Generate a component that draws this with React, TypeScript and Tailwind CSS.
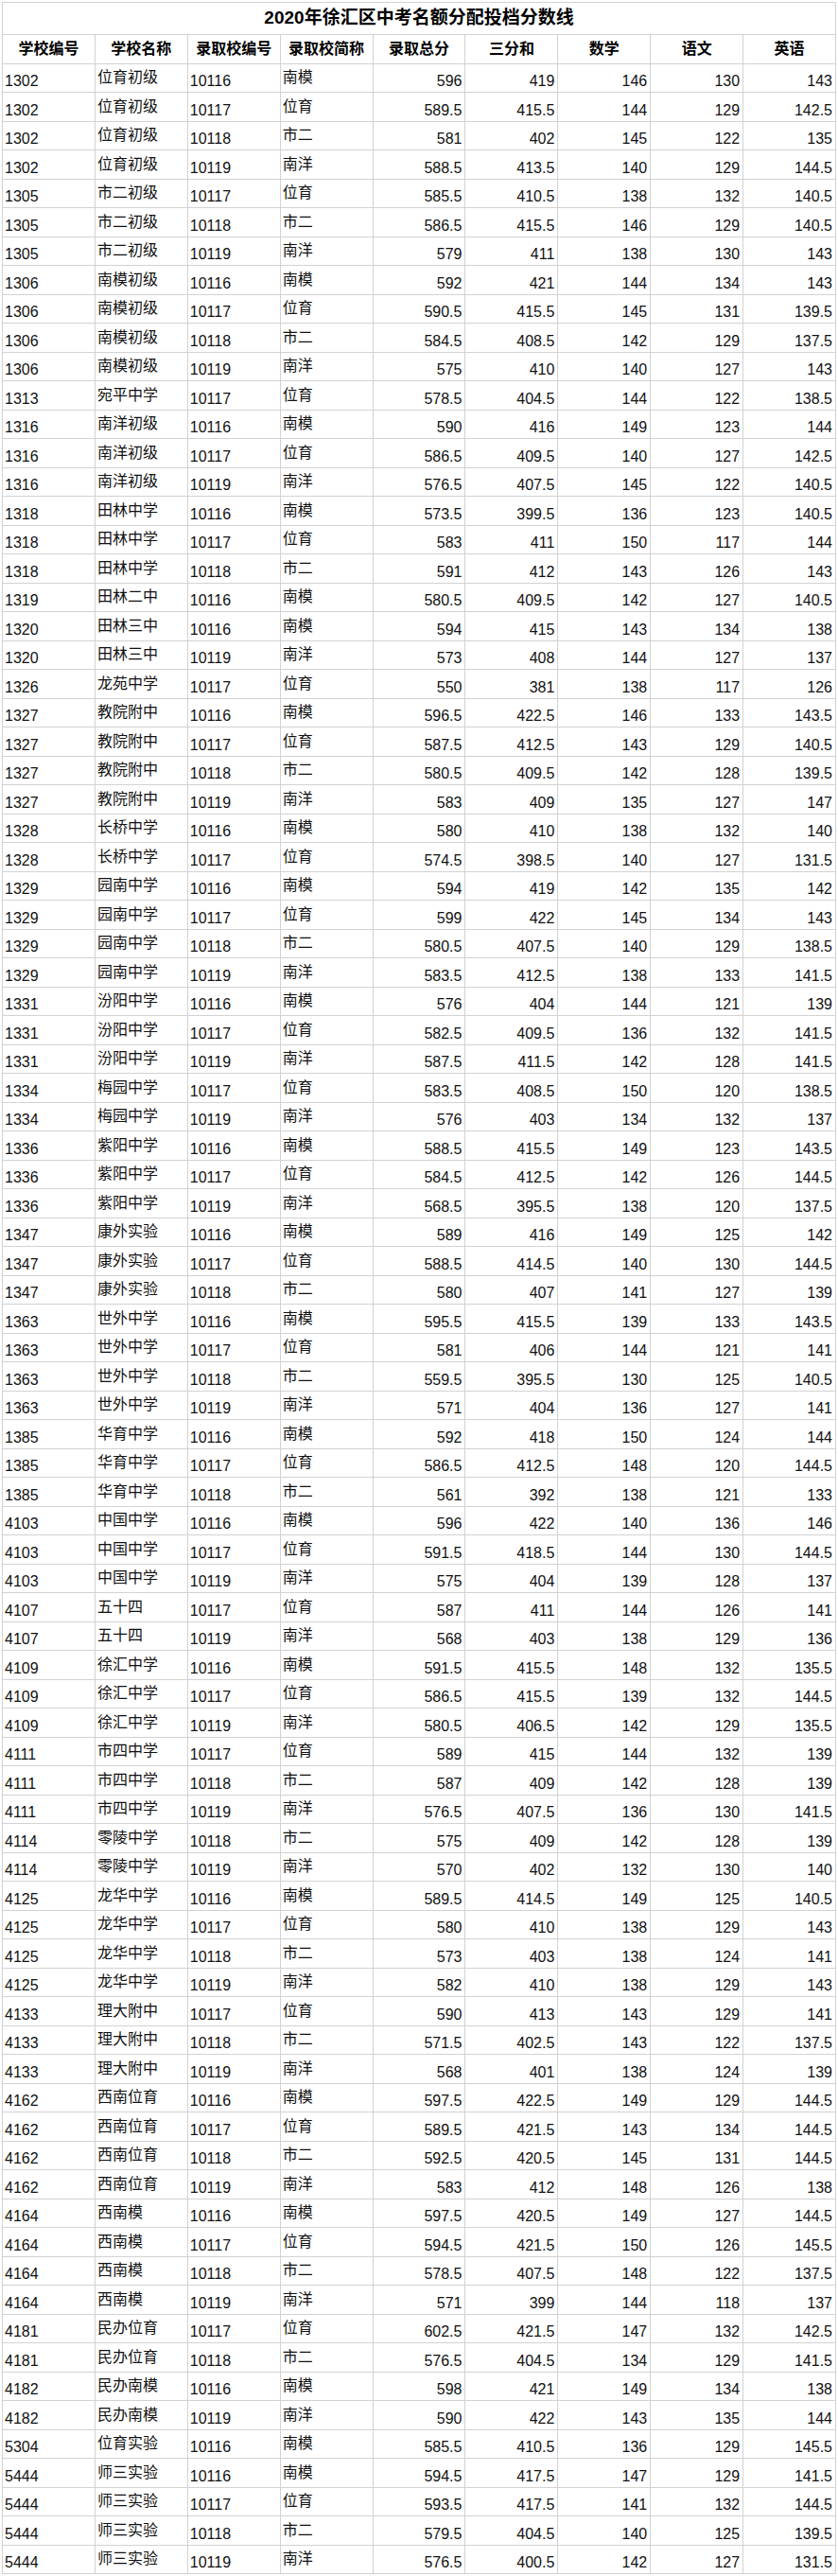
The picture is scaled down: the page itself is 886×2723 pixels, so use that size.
const SCHOOLS: Record<string, string> = {
  "10116": "南模",
  "10117": "位育",
  "10118": "市二",
  "10119": "南洋",
};

const HEADERS = ["学校编号", "学校名称", "录取校编号", "录取校简称", "录取总分", "三分和", "数学", "语文", "英语"];

// 学校编号 学校名称 录取校编号 录取总分 三分和 数学 语文 英语
const RAW = `1302 位育初级 10116 596 419 146 130 143
1302 位育初级 10117 589.5 415.5 144 129 142.5
1302 位育初级 10118 581 402 145 122 135
1302 位育初级 10119 588.5 413.5 140 129 144.5
1305 市二初级 10117 585.5 410.5 138 132 140.5
1305 市二初级 10118 586.5 415.5 146 129 140.5
1305 市二初级 10119 579 411 138 130 143
1306 南模初级 10116 592 421 144 134 143
1306 南模初级 10117 590.5 415.5 145 131 139.5
1306 南模初级 10118 584.5 408.5 142 129 137.5
1306 南模初级 10119 575 410 140 127 143
1313 宛平中学 10117 578.5 404.5 144 122 138.5
1316 南洋初级 10116 590 416 149 123 144
1316 南洋初级 10117 586.5 409.5 140 127 142.5
1316 南洋初级 10119 576.5 407.5 145 122 140.5
1318 田林中学 10116 573.5 399.5 136 123 140.5
1318 田林中学 10117 583 411 150 117 144
1318 田林中学 10118 591 412 143 126 143
1319 田林二中 10116 580.5 409.5 142 127 140.5
1320 田林三中 10116 594 415 143 134 138
1320 田林三中 10119 573 408 144 127 137
1326 龙苑中学 10117 550 381 138 117 126
1327 教院附中 10116 596.5 422.5 146 133 143.5
1327 教院附中 10117 587.5 412.5 143 129 140.5
1327 教院附中 10118 580.5 409.5 142 128 139.5
1327 教院附中 10119 583 409 135 127 147
1328 长桥中学 10116 580 410 138 132 140
1328 长桥中学 10117 574.5 398.5 140 127 131.5
1329 园南中学 10116 594 419 142 135 142
1329 园南中学 10117 599 422 145 134 143
1329 园南中学 10118 580.5 407.5 140 129 138.5
1329 园南中学 10119 583.5 412.5 138 133 141.5
1331 汾阳中学 10116 576 404 144 121 139
1331 汾阳中学 10117 582.5 409.5 136 132 141.5
1331 汾阳中学 10119 587.5 411.5 142 128 141.5
1334 梅园中学 10117 583.5 408.5 150 120 138.5
1334 梅园中学 10119 576 403 134 132 137
1336 紫阳中学 10116 588.5 415.5 149 123 143.5
1336 紫阳中学 10117 584.5 412.5 142 126 144.5
1336 紫阳中学 10119 568.5 395.5 138 120 137.5
1347 康外实验 10116 589 416 149 125 142
1347 康外实验 10117 588.5 414.5 140 130 144.5
1347 康外实验 10118 580 407 141 127 139
1363 世外中学 10116 595.5 415.5 139 133 143.5
1363 世外中学 10117 581 406 144 121 141
1363 世外中学 10118 559.5 395.5 130 125 140.5
1363 世外中学 10119 571 404 136 127 141
1385 华育中学 10116 592 418 150 124 144
1385 华育中学 10117 586.5 412.5 148 120 144.5
1385 华育中学 10118 561 392 138 121 133
4103 中国中学 10116 596 422 140 136 146
4103 中国中学 10117 591.5 418.5 144 130 144.5
4103 中国中学 10119 575 404 139 128 137
4107 五十四 10117 587 411 144 126 141
4107 五十四 10119 568 403 138 129 136
4109 徐汇中学 10116 591.5 415.5 148 132 135.5
4109 徐汇中学 10117 586.5 415.5 139 132 144.5
4109 徐汇中学 10119 580.5 406.5 142 129 135.5
4111 市四中学 10117 589 415 144 132 139
4111 市四中学 10118 587 409 142 128 139
4111 市四中学 10119 576.5 407.5 136 130 141.5
4114 零陵中学 10118 575 409 142 128 139
4114 零陵中学 10119 570 402 132 130 140
4125 龙华中学 10116 589.5 414.5 149 125 140.5
4125 龙华中学 10117 580 410 138 129 143
4125 龙华中学 10118 573 403 138 124 141
4125 龙华中学 10119 582 410 138 129 143
4133 理大附中 10117 590 413 143 129 141
4133 理大附中 10118 571.5 402.5 143 122 137.5
4133 理大附中 10119 568 401 138 124 139
4162 西南位育 10116 597.5 422.5 149 129 144.5
4162 西南位育 10117 589.5 421.5 143 134 144.5
4162 西南位育 10118 592.5 420.5 145 131 144.5
4162 西南位育 10119 583 412 148 126 138
4164 西南模 10116 597.5 420.5 149 127 144.5
4164 西南模 10117 594.5 421.5 150 126 145.5
4164 西南模 10118 578.5 407.5 148 122 137.5
4164 西南模 10119 571 399 144 118 137
4181 民办位育 10117 602.5 421.5 147 132 142.5
4181 民办位育 10118 576.5 404.5 134 129 141.5
4182 民办南模 10116 598 421 149 134 138
4182 民办南模 10119 590 422 143 135 144
5304 位育实验 10116 585.5 410.5 136 129 145.5
5444 师三实验 10116 594.5 417.5 147 129 141.5
5444 师三实验 10117 593.5 417.5 141 132 144.5
5444 师三实验 10118 579.5 404.5 140 125 139.5
5444 师三实验 10119 576.5 400.5 142 127 131.5`;

const ROWS = RAW.split("\n").map((line) => {
  const [code, name, target, ...scores] = line.trim().split(" ");
  return [code, name, target, SCHOOLS[target], ...scores];
});

function Cell({ value, col }: { value: string; col: number }) {
  if (col >= 4) {
    return (
      <div className="flex items-end justify-end border-r border-b border-[#d2d2d2] pr-[3px] pb-[3px] leading-none">
        {value}
      </div>
    );
  }
  if (col === 1 || col === 3) {
    return (
      <div className="flex items-end border-r border-b border-[#d2d2d2] pl-[2px] pb-[7px] leading-none">
        {value}
      </div>
    );
  }
  return (
    <div className="flex items-end border-r border-b border-[#d2d2d2] pl-[2px] pb-[3px] leading-none">
      {value}
    </div>
  );
}

export default function App() {
  return (
    <div className="min-h-[2723px] bg-white pt-[2px] pl-[2px] font-['Liberation_Sans','Noto_Sans_CJK_SC',sans-serif] text-[16px] text-[#111]">
      <div className="w-[882px] border-l border-t border-[#d2d2d2]">
        <div className="flex h-[33.5px] items-center justify-center border-r border-b border-[#d2d2d2] text-[19px] font-bold text-black">
          2020年徐汇区中考名额分配投档分数线
        </div>

        <div className="grid h-[31px] grid-cols-9">
          {HEADERS.map((h) => (
            <div
              key={h}
              className="flex items-center justify-center border-r border-b border-[#d2d2d2] font-bold text-black"
            >
              {h}
            </div>
          ))}
        </div>

        {ROWS.map((row, i) => (
          <div key={i} className="grid h-[30.5px] grid-cols-9">
            {row.map((v, j) => (
              <Cell key={j} value={v} col={j} />
            ))}
          </div>
        ))}
      </div>
    </div>
  );
}
